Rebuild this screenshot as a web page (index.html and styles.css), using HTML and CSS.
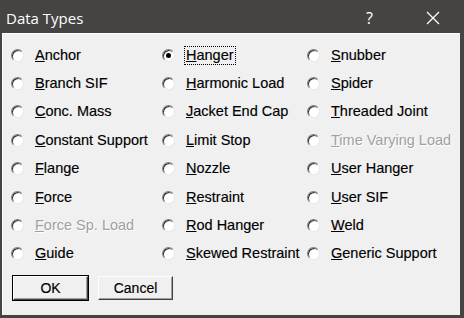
FILE: index.html
```html
<!DOCTYPE html>
<html>
<head>
    <title>Data Types</title>
    <link rel="stylesheet" href="styles.css">
</head>
<body>
    <div class="window">
        <div class="titlebar">
            <span class="title">Data Types</span>
            <span class="help">?</span>
            <span class="close">
                <svg width="16" height="16" viewBox="0 0 16 16"><path d="M2 2 L14 14 M14 2 L2 14" stroke="#fff" stroke-width="1.3" fill="none"/></svg>
            </span>
        </div>

        <div class="client">
            <div class="options" id="options"></div>

            <div class="buttons">
                <button class="btn default">OK</button>
                <button class="btn">Cancel</button>
            </div>
        </div>
    </div>

    <script>
        // columns are filled top to bottom
        const items = [
            ["Anchor"], ["Branch SIF"], ["Conc. Mass"], ["Constant Support"],
            ["Flange"], ["Force"], ["Force Sp. Load", "off"], ["Guide"],
            ["Hanger", "on"], ["Harmonic Load"], ["Jacket End Cap"], ["Limit Stop"],
            ["Nozzle"], ["Restraint"], ["Rod Hanger"], ["Skewed Restraint"],
            ["Snubber"], ["Spider"], ["Threaded Joint"], ["Time Varying Load", "off"],
            ["User Hanger"], ["User SIF"], ["Weld"], ["Generic Support"]
        ];

        const box = document.getElementById('options');
        items.forEach(([label, state]) => {
            const el = document.createElement('div');
            el.className = 'option' + (state === 'off' ? ' disabled' : '') + (state === 'on' ? ' checked' : '');
            el.innerHTML = '<span class="radio"></span>' +
                `<span class="label"><u>${label[0]}</u>${label.slice(1)}</span>`;
            box.appendChild(el);
        });
    </script>
</body>
</html>
```

FILE: styles.css
```css
body {
    margin: 0;
    background: #464442;
}

.window {
    width: 464px;
    height: 318px;
    background: #464442;
    display: flex;
    flex-direction: column;
    font-family: "Liberation Sans", Arial, sans-serif;
}

.titlebar {
    height: 33px;
    display: flex;
    align-items: center;
    color: #fff;
    font-family: "Open Sans", sans-serif;
    font-size: 15px;
}

.title {
    padding-left: 6px;
    flex: 1;
    padding-top: 2px;
}

.help {
    width: 59px;
    font-size: 16px;
    padding-top: 2px;
}

.close {
    width: 39px;
    display: flex;
    padding-top: 3px;
}

.client {
    flex: 1;
    margin: 0 4px 3px 2px;
    background: #f0f0f0;
    border-top: 1px solid #fff;
    border-left: 1px solid #fff;
    padding: 7px 0 0 8px;
}

.options {
    display: grid;
    grid-template-columns: 151px 145px auto;
    grid-template-rows: repeat(8, 28.4px);
    grid-auto-flow: column;
}

.option {
    display: flex;
    align-items: center;
    font-size: 14.5px;
    color: #000;
    white-space: nowrap;
    -webkit-text-stroke: 0.15px #000;
}

/* classic sunken radio circle */
.radio {
    flex: none;
    width: 11px;
    height: 11px;
    margin-right: 9px;
    border-radius: 50%;
    background: #fff;
    border: 1px solid;
    border-color: #808080 #e8e8e8 #e8e8e8 #808080;
    box-shadow: inset 1px 1px 0 #303030;
    position: relative;
}

.checked .radio::after {
    content: "";
    position: absolute;
    left: 3px;
    top: 3px;
    width: 5px;
    height: 5px;
    border-radius: 50%;
    background: #000;
}

.label {
    padding: 0 1px 1px;
    border: 1px dotted transparent;
}

.checked .label {
    border-color: #000;
}

.disabled .label {
    color: #a0a0a0;
    -webkit-text-stroke: 0;
    text-shadow: 1px 1px 0 #fff;
}

.buttons {
    display: flex;
    gap: 10px;
    margin-top: 8px;
    padding-left: 2px;
}

.btn {
    width: 75px;
    height: 24px;
    font-family: "Liberation Sans", Arial, sans-serif;
    font-size: 14px;
    -webkit-text-stroke: 0.15px #000;
    background: #f0f0f0;
    border: 1px solid;
    border-color: #fff #404040 #404040 #fff;
    box-shadow: inset -1px -1px 0 #a0a0a0;
    padding: 0;
}

.btn.default {
    outline: 1px solid #000;
    outline-offset: 0;
}
```
